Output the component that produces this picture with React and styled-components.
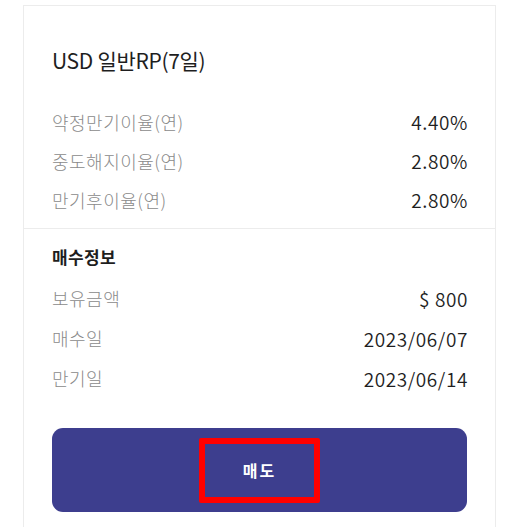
import React from "react";
import styled, { createGlobalStyle } from "styled-components";

const GlobalStyle = createGlobalStyle`
  body {
    margin: 0;
    background: #fff;
    font-family: "Noto Sans CJK KR", "Noto Sans", sans-serif;
  }
`;

// 카드 전체
const Card = styled.div`
  margin: 5px 0 0 23px;
  width: 471px;
  border: 1px solid #ececec;
  border-bottom: none;
  background: #fff;
`;

const Section = styled.div`
  padding: ${(props) => props.padding};
  border-bottom: ${(props) => (props.divider ? "1px solid #ececec" : "none")};
`;

const Title = styled.h2`
  margin: 0 0 28px;
  font-size: 21px;
  font-weight: 400;
  line-height: 28px;
  color: #1e1e1e;
  letter-spacing: -0.3px;
`;

const SubTitle = styled.h3`
  margin: 0 0 8px;
  font-size: 17px;
  font-weight: 700;
  line-height: 26px;
  color: #1e1e1e;
  letter-spacing: 0.4px;
`;

const Row = styled.div`
  display: flex;
  justify-content: space-between;
  align-items: center;
  height: ${(props) => props.height || 39}px;
`;

const Label = styled.span`
  font-size: 18px;
  font-weight: 300;
  color: #8a8a8a;
  letter-spacing: 0.5px;
`;

const Value = styled.span`
  font-size: 19px;
  font-weight: 350;
  color: #1e1e1e;
  letter-spacing: 0.6px;
  margin-right: -1px;
`;

const SellButton = styled.button`
  display: flex;
  align-items: center;
  justify-content: center;
  width: 100%;
  height: 84px;
  margin-top: 30px;
  border: none;
  border-radius: 11px;
  background: #3d3e8e;
  cursor: pointer;
  font-family: inherit;
`;

// 강조 표시용 빨간 테두리
const Highlight = styled.span`
  display: flex;
  align-items: center;
  justify-content: center;
  box-sizing: border-box;
  width: 121px;
  height: 65px;
  border: 6px solid #f00;
  border-radius: 2px;
  color: #fff;
  font-size: 16px;
  font-weight: 700;
  letter-spacing: 2px;
`;

const rates = [
  { label: "약정만기이율(연)", value: "4.40%" },
  { label: "중도해지이율(연)", value: "2.80%" },
  { label: "만기후이율(연)", value: "2.80%" },
];

const buyInfo = [
  { label: "보유금액", value: "$ 800" },
  { label: "매수일", value: "2023/06/07" },
  { label: "만기일", value: "2023/06/14" },
];

const App = () => {
  return (
    <>
      <GlobalStyle />
      <Card>
        <Section divider padding="40px 28px 9px 28px">
          <Title>USD 일반RP(7일)</Title>
          {rates.map((item) => (
            <Row key={item.label}>
              <Label>{item.label}</Label>
              <Value>{item.value}</Value>
            </Row>
          ))}
        </Section>
        <Section padding="15px 28px 20px 28px">
          <SubTitle>매수정보</SubTitle>
          {buyInfo.map((item) => (
            <Row key={item.label} height={40}>
              <Label>{item.label}</Label>
              <Value>{item.value}</Value>
            </Row>
          ))}
          <SellButton>
            <Highlight>매도</Highlight>
          </SellButton>
        </Section>
      </Card>
    </>
  );
};

export default App;
